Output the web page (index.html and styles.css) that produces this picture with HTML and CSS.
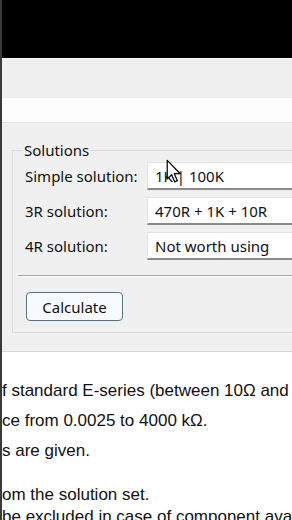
FILE: index.html
```html
<!DOCTYPE html>
<html lang="en">
  <head>
    <meta charset="UTF-8" />
    <meta name="viewport" content="width=device-width, initial-scale=1.0" />
    <title>Resistor calculator</title>
    <link rel="stylesheet" href="styles.css">
  </head>
  <body>
    <div class="screen">
      <div class="video-top"></div>
      <div class="toolbar"></div>
      <div class="strip"></div>

      <div class="panel">
        <fieldset class="group">
          <legend>Solutions</legend>
          <div class="rows">
            <div class="row">
              <span class="label">Simple solution:</span>
              <div class="field">1K | 100K</div>
            </div>
            <div class="row">
              <span class="label">3R solution:</span>
              <div class="field">470R + 1K + 10R</div>
            </div>
            <div class="row">
              <span class="label">4R solution:</span>
              <div class="field">Not worth using</div>
            </div>
          </div>
          <div class="sep"></div>
          <button class="calc">Calculate</button>
        </fieldset>
      </div>

      <div class="notes">
        <p class="item">f standard E-series (between 10Ω and</p>
        <p class="item">ce from 0.0025 to 4000 kΩ.</p>
        <p class="item cut">s are given.</p>
        <p class="para">om the solution set.<br />be excluded in case of component ava</p>
      </div>

      <!-- mouse pointer over the first field -->
      <svg class="cursor" width="16" height="25" viewBox="0 0 13 20">
        <path d="M1 1 L1 16 L4.6 12.6 L7 18.4 L9.2 17.5 L6.8 11.8 L11.6 11.8 Z" fill="#fff" stroke="#000" stroke-width="1" stroke-linejoin="round" />
      </svg>
    </div>
  </body>
</html>
```

FILE: styles.css
```css
html,
body {
  margin: 0;
  padding: 0;
}
body {
  width: 292px;
  height: 520px;
  overflow: hidden;
  background-color: white;
}
.screen {
  position: relative;
  height: 520px;
  border-left: 2px solid #3a3a3a;
  overflow: hidden;
}
.video-top {
  height: 58px;
  background-color: black;
}
.toolbar {
  height: 39px;
  background-color: #efefef;
  border-top: 1px solid #fafafa;
}
.strip {
  height: 24px;
  background-color: #fdfdfd;
}
.panel {
  background-color: #f0f0f0;
  border-top: 1px solid #e2e2e2;
  border-bottom: 1px solid #d6d6d6;
  padding: 18px 0 18px 10px;
  margin-bottom: 2px;
}
.group {
  margin: 0;
  margin-right: -40px;
  padding: 3px 0 11px 12px;
  border: 1px solid #dadada;
  font-family: "Noto Sans", sans-serif;
  font-size: 15px;
  color: #111;
}
.group legend {
  padding: 0 1px;
  margin-left: -2px;
  font-size: 15px;
  line-height: 18px;
}
.rows {
  display: grid;
  gap: 7px;
}
.row {
  display: flex;
  align-items: center;
  height: 28px;
}
.label {
  width: 122px;
  flex: none;
}
.field {
  flex: 1;
  height: 28px;
  box-sizing: border-box;
  line-height: 26px;
  padding-left: 7px;
  background-color: white;
  border: 1px solid #e4e4e4;
  border-bottom: 2px solid #8a8a8a;
}
.sep {
  margin: 15px 0 0 -7px;
  border-top: 1px solid #a4a4a4;
  border-bottom: 1px solid #fcfcfc;
}
.calc {
  display: block;
  margin-top: 15px;
  margin-left: 1px;
  width: 97px;
  height: 29px;
  padding: 0;
  border: 1px solid #587484;
  border-radius: 4px;
  background-color: #f8fbfd;
  font-family: "Noto Sans", sans-serif;
  font-size: 15px;
  color: #111;
}
.notes {
  padding-top: 22px;
  font-family: "Liberation Sans", Arial, sans-serif;
  font-size: 17px;
  color: #111;
  white-space: nowrap;
}
.notes p {
  margin: 0;
}
.item {
  line-height: 30px;
}
.cut {
  margin-left: -6px;
}
.para {
  margin-top: 18px !important;
  line-height: 22px;
}
.cursor {
  position: absolute;
  left: 164px;
  top: 159px;
}
```
